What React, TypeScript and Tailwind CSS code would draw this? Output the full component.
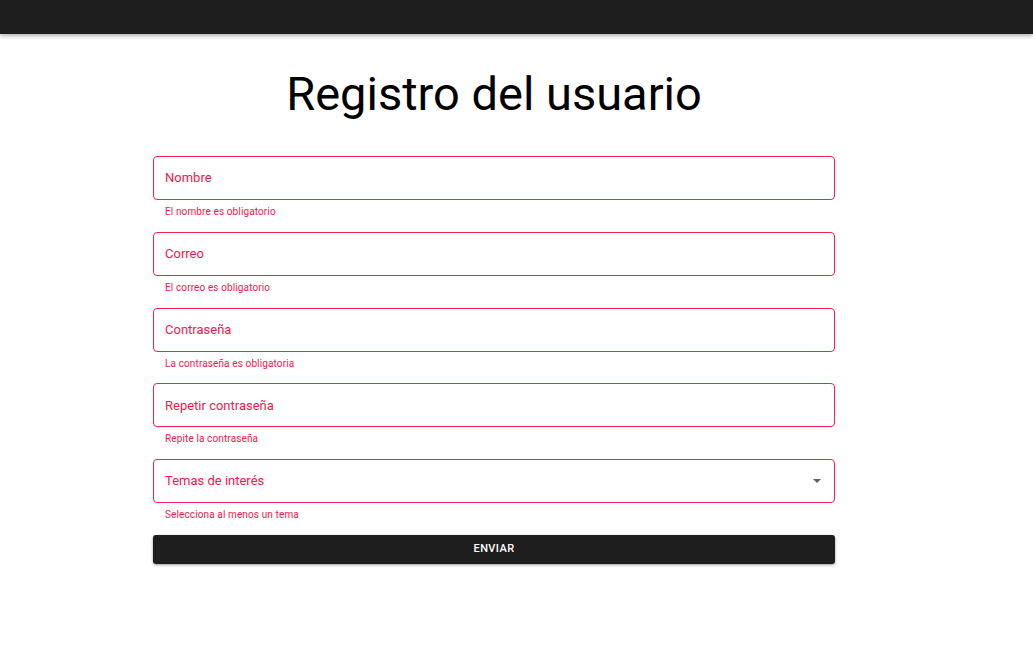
const FIELDS = [
  { label: "Nombre", help: "El nombre es obligatorio" },
  { label: "Correo", help: "El correo es obligatorio" },
  { label: "Contraseña", help: "La contraseña es obligatoria" },
  { label: "Repetir contraseña", help: "Repite la contraseña" },
];

function Field({ label, help, select }: { label: string; help: string; select?: boolean }) {
  return (
    <div className="flex flex-col">
      <div className="h-[44px] flex items-center justify-between border border-[#f2214d] rounded-[4px] pl-[11px] pr-[13px]">
        <span className="text-[13px] text-[#f5164d]">{label}</span>
        {select && (
          <svg width="8" height="4" viewBox="0 0 8 4">
            <path d="M0 0 L8 0 L4 4 Z" fill="#5f5f5f" />
          </svg>
        )}
      </div>
      <span className="text-[10px] tracking-[0.12px] text-[#f5164d] pl-[12px] mt-[5px] h-[26.75px] leading-[14px]">{help}</span>
    </div>
  );
}

export default function App() {
  return (
    <div className="min-h-[658px] bg-white" style={{ fontFamily: "Roboto, 'Liberation Sans', sans-serif" }}>
      <div className="h-[34px] bg-[#1e1e1e] shadow-[0_2px_4px_rgba(0,0,0,0.3)]" />
      <div className="ml-[153px] w-[682px] flex flex-col">
        <h1 className="text-[47px] leading-[56px] text-black text-center mt-[32px] mb-[34px]">Registro del usuario</h1>
        {FIELDS.map((f) => (
          <Field key={f.label} label={f.label} help={f.help} />
        ))}
        <Field label="Temas de interés" help="Selecciona al menos un tema" select />
        <button className="h-[29px] bg-[#1e1e1e] text-white text-[11px] font-medium tracking-[0.4px] rounded-[3px] shadow-[0_1px_3px_rgba(0,0,0,0.4)]">
          ENVIAR
        </button>
      </div>
    </div>
  );
}
